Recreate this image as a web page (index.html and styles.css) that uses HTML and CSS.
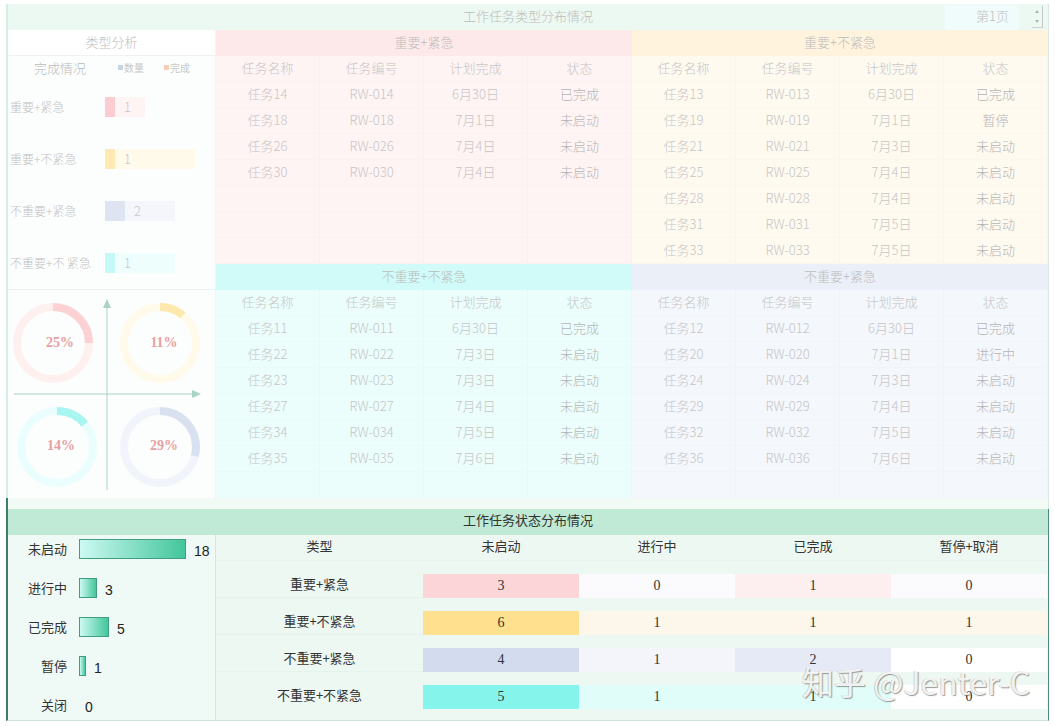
FILE: index.html
```html
<!DOCTYPE html>
<html lang="zh">
<head>
<meta charset="utf-8">
<title>工作任务分布情况</title>
<link rel="stylesheet" href="styles.css">
</head>
<body>
<div class="page">
  <section class="top">
    <header class="top-title">
      <span class="top-title-text">工作任务类型分布情况</span>
      <div class="pager">
        <span class="pager-box">第1页</span>
        <span class="spin"><i class="spin-up"></i><i class="spin-down"></i></span>
      </div>
    </header>
    <div class="top-body">
      <aside class="type-panel">
        <div class="panel-head">类型分析</div>
        <div class="panel-chart">
          <div class="chart-legend">
            <span class="chart-title">完成情况</span>
            <span class="lg"><i class="lg-dot lg-n"></i>数量</span>
            <span class="lg"><i class="lg-dot lg-c"></i>完成</span>
          </div>
          <div class="hbar-row"><span class="hbar-label">重要+紧急</span><div class="hbar-track track-pink" style="width:40px"><i class="hbar-fill fill-pink" style="width:10px"></i><span class="hbar-val">1</span></div></div>
          <div class="hbar-row"><span class="hbar-label">重要+不紧急</span><div class="hbar-track track-yellow" style="width:90px"><i class="hbar-fill fill-yellow" style="width:10px"></i><span class="hbar-val">1</span></div></div>
          <div class="hbar-row"><span class="hbar-label">不重要+紧急</span><div class="hbar-track track-lav" style="width:70px"><i class="hbar-fill fill-lav" style="width:20px"></i><span class="hbar-val">2</span></div></div>
          <div class="hbar-row"><span class="hbar-label">不重要+不 紧急</span><div class="hbar-track track-cyan" style="width:70px"><i class="hbar-fill fill-cyan" style="width:10px"></i><span class="hbar-val">1</span></div></div>
        </div>
        <div class="quad-chart">
          <svg width="207" height="208" viewBox="0 0 207 208">
            <line x1="99" y1="16" x2="99" y2="200" class="axis"/>
            <polygon points="99,9 95,18 103,18" class="axis-head"/>
            <line x1="6" y1="104" x2="186" y2="104" class="axis"/>
            <polygon points="193,104 184,100 184,108" class="axis-head"/>
            <circle cx="45" cy="53" r="36" class="track t-pink"/>
            <circle cx="45" cy="53" r="36" class="arc a-pink" stroke-dasharray="56.5 226.2" transform="rotate(-90 45 53)"/>
            <text x="52" y="57" class="pct">25%</text>
            <circle cx="152" cy="53" r="36" class="track t-yellow"/>
            <circle cx="152" cy="53" r="36" class="arc a-yellow" stroke-dasharray="24.9 226.2" transform="rotate(-90 152 53)"/>
            <text x="156" y="57" class="pct">11%</text>
            <circle cx="49" cy="157" r="36" class="track t-cyan"/>
            <circle cx="49" cy="157" r="36" class="arc a-cyan" stroke-dasharray="31.7 226.2" transform="rotate(-90 49 157)"/>
            <text x="53" y="160" class="pct">14%</text>
            <circle cx="152" cy="157" r="36" class="track t-lav"/>
            <circle cx="152" cy="157" r="36" class="arc a-lav" stroke-dasharray="65.6 226.2" transform="rotate(-90 152 157)"/>
            <text x="156" y="160" class="pct">29%</text>
          </svg>
        </div>
      </aside>
      <div class="quads">
        <div class="quad q-pink">
          <div class="q-head">重要+紧急</div>
          <div class="q-grid">
            <span>任务名称</span><span>任务编号</span><span>计划完成</span><span>状态</span>
            <span>任务14</span><span>RW-014</span><span>6月30日</span><span class="st">已完成</span>
            <span>任务18</span><span>RW-018</span><span>7月1日</span><span class="st">未启动</span>
            <span>任务26</span><span>RW-026</span><span>7月4日</span><span class="st">未启动</span>
            <span>任务30</span><span>RW-030</span><span>7月4日</span><span class="st">未启动</span>
            <span></span><span></span><span></span><span></span>
            <span></span><span></span><span></span><span></span>
            <span></span><span></span><span></span><span></span>
          </div>
        </div>
        <div class="quad q-yellow">
          <div class="q-head">重要+不紧急</div>
          <div class="q-grid">
            <span>任务名称</span><span>任务编号</span><span>计划完成</span><span>状态</span>
            <span>任务13</span><span>RW-013</span><span>6月30日</span><span class="st">已完成</span>
            <span>任务19</span><span>RW-019</span><span>7月1日</span><span class="st">暂停</span>
            <span>任务21</span><span>RW-021</span><span>7月3日</span><span class="st">未启动</span>
            <span>任务25</span><span>RW-025</span><span>7月4日</span><span class="st">未启动</span>
            <span>任务28</span><span>RW-028</span><span>7月4日</span><span class="st">未启动</span>
            <span>任务31</span><span>RW-031</span><span>7月5日</span><span class="st">未启动</span>
            <span>任务33</span><span>RW-033</span><span>7月5日</span><span class="st">未启动</span>
          </div>
        </div>
        <div class="quad q-cyan">
          <div class="q-head">不重要+不紧急</div>
          <div class="q-grid">
            <span>任务名称</span><span>任务编号</span><span>计划完成</span><span>状态</span>
            <span>任务11</span><span>RW-011</span><span>6月30日</span><span class="st">已完成</span>
            <span>任务22</span><span>RW-022</span><span>7月3日</span><span class="st">未启动</span>
            <span>任务23</span><span>RW-023</span><span>7月3日</span><span class="st">未启动</span>
            <span>任务27</span><span>RW-027</span><span>7月4日</span><span class="st">未启动</span>
            <span>任务34</span><span>RW-034</span><span>7月5日</span><span class="st">未启动</span>
            <span>任务35</span><span>RW-035</span><span>7月6日</span><span class="st">未启动</span>
            <span></span><span></span><span></span><span></span>
          </div>
        </div>
        <div class="quad q-lav">
          <div class="q-head">不重要+紧急</div>
          <div class="q-grid">
            <span>任务名称</span><span>任务编号</span><span>计划完成</span><span>状态</span>
            <span>任务12</span><span>RW-012</span><span>6月30日</span><span class="st">已完成</span>
            <span>任务20</span><span>RW-020</span><span>7月1日</span><span class="st">进行中</span>
            <span>任务24</span><span>RW-024</span><span>7月3日</span><span class="st">未启动</span>
            <span>任务29</span><span>RW-029</span><span>7月4日</span><span class="st">未启动</span>
            <span>任务32</span><span>RW-032</span><span>7月5日</span><span class="st">未启动</span>
            <span>任务36</span><span>RW-036</span><span>7月6日</span><span class="st">未启动</span>
            <span></span><span></span><span></span><span></span>
          </div>
        </div>
      </div>
    </div>
  </section>
  <div class="sep-strip"></div>
  <section class="bottom">
    <header class="bottom-title">工作任务状态分布情况</header>
    <div class="bottom-body">
      <aside class="status-panel">
        <div class="sbar-row"><span class="sbar-label">未启动</span><i class="sbar" style="width:107px"></i><span class="sbar-val">18</span></div>
        <div class="sbar-row"><span class="sbar-label">进行中</span><i class="sbar" style="width:18px"></i><span class="sbar-val">3</span></div>
        <div class="sbar-row"><span class="sbar-label">已完成</span><i class="sbar" style="width:30px"></i><span class="sbar-val">5</span></div>
        <div class="sbar-row"><span class="sbar-label">暂停</span><i class="sbar" style="width:7px"></i><span class="sbar-val">1</span></div>
        <div class="sbar-row"><span class="sbar-label">关闭</span><span class="sbar-val sbar-zero">0</span></div>
      </aside>
      <div class="matrix">
        <div class="m-row m-head"><span>类型</span><span>未启动</span><span>进行中</span><span>已完成</span><span>暂停+取消</span></div>
        <div class="m-row"><span class="m-type">重要+紧急</span><span class="c c-pink-a">3</span><span class="c c-white">0</span><span class="c c-pink-b">1</span><span class="c c-white">0</span></div>
        <div class="m-row"><span class="m-type">重要+不紧急</span><span class="c c-yel-a">6</span><span class="c c-yel-b">1</span><span class="c c-yel-b">1</span><span class="c c-yel-b">1</span></div>
        <div class="m-row"><span class="m-type">不重要+紧急</span><span class="c c-lav-a">4</span><span class="c c-lav-b">1</span><span class="c c-lav-c">2</span><span class="c c-pure">0</span></div>
        <div class="m-row"><span class="m-type">不重要+不紧急</span><span class="c c-cy-a">5</span><span class="c c-cy-b">1</span><span class="c c-cy-b">1</span><span class="c c-pure">0</span></div>
      </div>
    </div>
    <div class="watermark">知乎 @Jenter-C</div>
  </section>
</div>
</body>
</html>
```

FILE: styles.css
```css
* { box-sizing: border-box; }

body {
  margin: 0;
  background: #ffffff;
  font-family: "Noto Sans CJK SC", "Liberation Sans", sans-serif;
  font-size: 13px;
}

.page {
  width: 1043px;
  margin-left: 6px;
  padding-top: 4px;
}

/* ---------- top region ---------- */
.top {
  border-left: 2px solid #d3efe6;
  border-right: 1px solid #dde8e4;
}

.top-title {
  height: 26px;
  background: #ecf8f2;
  display: grid;
  grid-template-columns: 1fr auto 1fr;
  align-items: center;
}

.top-title-text {
  grid-column: 2;
  grid-row: 1;
  color: #bcbcbc;
  font-weight: 300;
  padding-bottom: 4px;
}

.pager {
  grid-column: 3;
  grid-row: 1;
  justify-self: end;
  display: flex;
  align-items: center;
  gap: 13px;
  margin-right: 5px;
  height: 26px;
}

.pager-box {
  width: 74px;
  height: 25px;
  background: #effcfb;
  color: #c0c0c0;
  font-weight: 300;
  display: flex;
  align-items: center;
  justify-content: flex-end;
  padding-right: 10px;
  padding-bottom: 3px;
}

.spin {
  width: 11px;
  height: 22px;
  border-right: 1px solid #c8c8c8;
  border-bottom: 1px solid #d0d0d0;
  display: flex;
  flex-direction: column;
  align-items: center;
  justify-content: space-around;
}

.spin-up, .spin-down {
  display: block;
  width: 0;
  height: 0;
  border-left: 2.5px solid transparent;
  border-right: 2.5px solid transparent;
}
.spin-up { border-bottom: 3px solid #b0b0b0; }
.spin-down { border-top: 3px solid #b0b0b0; }

.top-body {
  display: flex;
}

.type-panel {
  width: 208px;
  flex: none;
  background: #fcfefd;
  border-right: 1px solid #f2f5f4;
}

.panel-head {
  height: 26px;
  line-height: 24px;
  text-align: center;
  background: #ffffff;
  color: #bcbcbc;
  font-weight: 300;
  border-bottom: 1px solid #eef3f1;
}

.panel-chart {
  height: 234px;
  border-bottom: 1px solid #edf2f0;
}

.chart-legend {
  height: 25px;
  display: flex;
  align-items: center;
  padding-left: 26px;
  padding-bottom: 2px;
}

.chart-title {
  color: #bababa;
  font-weight: 300;
  margin-right: 32px;
}

.lg {
  display: flex;
  align-items: center;
  font-size: 10px;
  color: #c8c8c8;
  margin-right: 20px;
}

.lg-dot {
  display: block;
  width: 5px;
  height: 5px;
  margin-right: 1px;
}
.lg-n { background: #c6d6e6; }
.lg-c { background: #f6cdb6; }

.hbar-row {
  height: 52px;
  display: flex;
  align-items: center;
}

.hbar-label {
  width: 97px;
  flex: none;
  padding-left: 2px;
  padding-bottom: 2px;
  font-size: 12px;
  font-weight: 300;
  color: #c2c2c2;
  white-space: pre;
}

.hbar-track {
  height: 20px;
  display: flex;
  align-items: center;
}

.hbar-fill {
  display: block;
  height: 20px;
}

.hbar-val {
  margin-left: 9px;
  color: #c8c8c8;
  font-weight: 300;
  padding-bottom: 2px;
}

.track-pink { background: #fff4f4; }
.fill-pink { background: #fbcdd0; }
.track-yellow { background: #fffaea; }
.fill-yellow { background: #fde9b2; }
.track-lav { background: #f4f6fc; }
.fill-lav { background: #dfe4f3; }
.track-cyan { background: #edfefd; }
.fill-cyan { background: #c5f9f6; }

.quad-chart {
  height: 208px;
}

.quad-chart svg { display: block; }

.axis { stroke: #a9d3c4; stroke-width: 1; }
.axis-head { fill: #a9d3c4; }

.track { fill: none; stroke-width: 8; }
.arc { fill: none; stroke-width: 8; }
.t-pink { stroke: #fff0f0; }
.a-pink { stroke: #fbd1d4; }
.t-yellow { stroke: #fffaea; }
.a-yellow { stroke: #fde9ad; }
.t-cyan { stroke: #e9fefd; }
.a-cyan { stroke: #a9f5f1; }
.t-lav { stroke: #f1f4fa; }
.a-lav { stroke: #d9e0f0; }

.pct {
  font-family: "Liberation Serif", serif;
  font-size: 14px;
  font-weight: bold;
  fill: #e8a0a0;
  text-anchor: middle;
}

.quads {
  display: grid;
  grid-template-columns: 416px 416px;
  grid-template-rows: 234px 234px;
}

.q-head {
  height: 26px;
  line-height: 24px;
  text-align: center;
  color: #bcbcbc;
  font-weight: 300;
}

.q-grid {
  display: grid;
  grid-template-columns: repeat(4, 1fr);
  grid-auto-rows: 26px;
}

.q-grid span {
  display: flex;
  align-items: center;
  justify-content: center;
  padding-bottom: 2px;
  color: #c6c6c6;
  font-weight: 300;
  border-right: 1px solid rgba(0, 0, 0, 0.016);
  border-bottom: 1px solid rgba(0, 0, 0, 0.01);
}

.q-grid span.st { color: #b4b4b4; }

.q-pink { background: #fff4f4; }
.q-pink .q-head { background: #fde9e9; }
.q-yellow { background: #fffaf0; }
.q-yellow .q-head { background: #fff3dd; }
.q-cyan { background: #ebfefc; }
.q-cyan .q-head { background: #d0fbf8; }
.q-lav { background: #f4f7fc; }
.q-lav .q-head { background: #ebf0f8; }

/* ---------- separator ---------- */
.sep-strip {
  height: 11px;
  background: #f2faf6;
  border-left: 2px solid #3d7e6b;
  border-right: 1px solid #dde8e4;
}

/* ---------- bottom region ---------- */
.bottom {
  position: relative;
  background: #eef8f3;
  border-left: 2px solid #3d7e6b;
  border-right: 1px solid #4c8a78;
  border-bottom: 1px solid #cde3d9;
}

.bottom-title {
  height: 26px;
  line-height: 22px;
  text-align: center;
  background: #c0ead5;
  color: #333333;
}

.bottom-body {
  display: flex;
  height: 185px;
}

.status-panel {
  width: 208px;
  flex: none;
  background: #eff9f5;
  border-right: 1px solid #d3e7dd;
  display: grid;
  grid-template-rows: repeat(4, 39px) 29px;
}

.sbar-row {
  display: flex;
  align-items: center;
  height: 20px;
  margin-top: 4px;
}

.sbar-label {
  width: 59px;
  text-align: right;
  color: #333333;
  padding-bottom: 2px;
}

.sbar {
  display: block;
  height: 20px;
  margin-left: 12px;
  border: 1px solid #3f9d80;
  background: linear-gradient(90deg, #ccf9f2, #43c69b);
}

.sbar-val {
  margin-left: 8px;
  font-family: "Liberation Sans", sans-serif;
  font-size: 14px;
  color: #222222;
  padding-top: 4px;
}

.sbar-zero { margin-left: 18px; }

.matrix {
  width: 831px;
}

.m-row {
  display: grid;
  grid-template-columns: 207px repeat(4, 156px);
  height: 37px;
  padding-top: 13px;
  border-top: 1px solid #e4f4ec;
}

.m-row span {
  height: 24px;
  display: flex;
  align-items: center;
  justify-content: center;
}

.m-row span.m-type {
  color: #333333;
  padding-bottom: 5px;
}

.m-head {
  height: 25px;
  padding-top: 0;
  border-top: none;
  align-items: center;
  color: #333333;
}

.m-head span { padding-bottom: 5px; }

.c {
  font-family: "Liberation Serif", serif;
  font-size: 14px;
  color: #333333;
}

.c-pink-a { background: #fcd5d9; }
.c-pink-b { background: #fdeef0; }
.c-white { background: #fbfbfd; }
.c-yel-a { background: #fee08f; }
.c-yel-b { background: #fdf6ea; }
.c-lav-a { background: #d3dcef; }
.c-lav-b { background: #f3f5fa; }
.c-lav-c { background: #e6eaf6; }
.c-cy-a { background: #85f5ec; }
.c-cy-b { background: #e0fdf9; }
.c-pure { background: #ffffff; }

.watermark {
  position: absolute;
  left: 794px;
  top: 153px;
  font-family: "Noto Sans CJK SC", "Liberation Sans", sans-serif;
  font-size: 32px;
  line-height: 1.2;
  color: rgba(250, 250, 250, 0.92);
  text-shadow: 1px 1px 1px rgba(90, 90, 90, 0.6), -1px 0 0 rgba(150, 150, 150, 0.4);
  white-space: nowrap;
}
```
